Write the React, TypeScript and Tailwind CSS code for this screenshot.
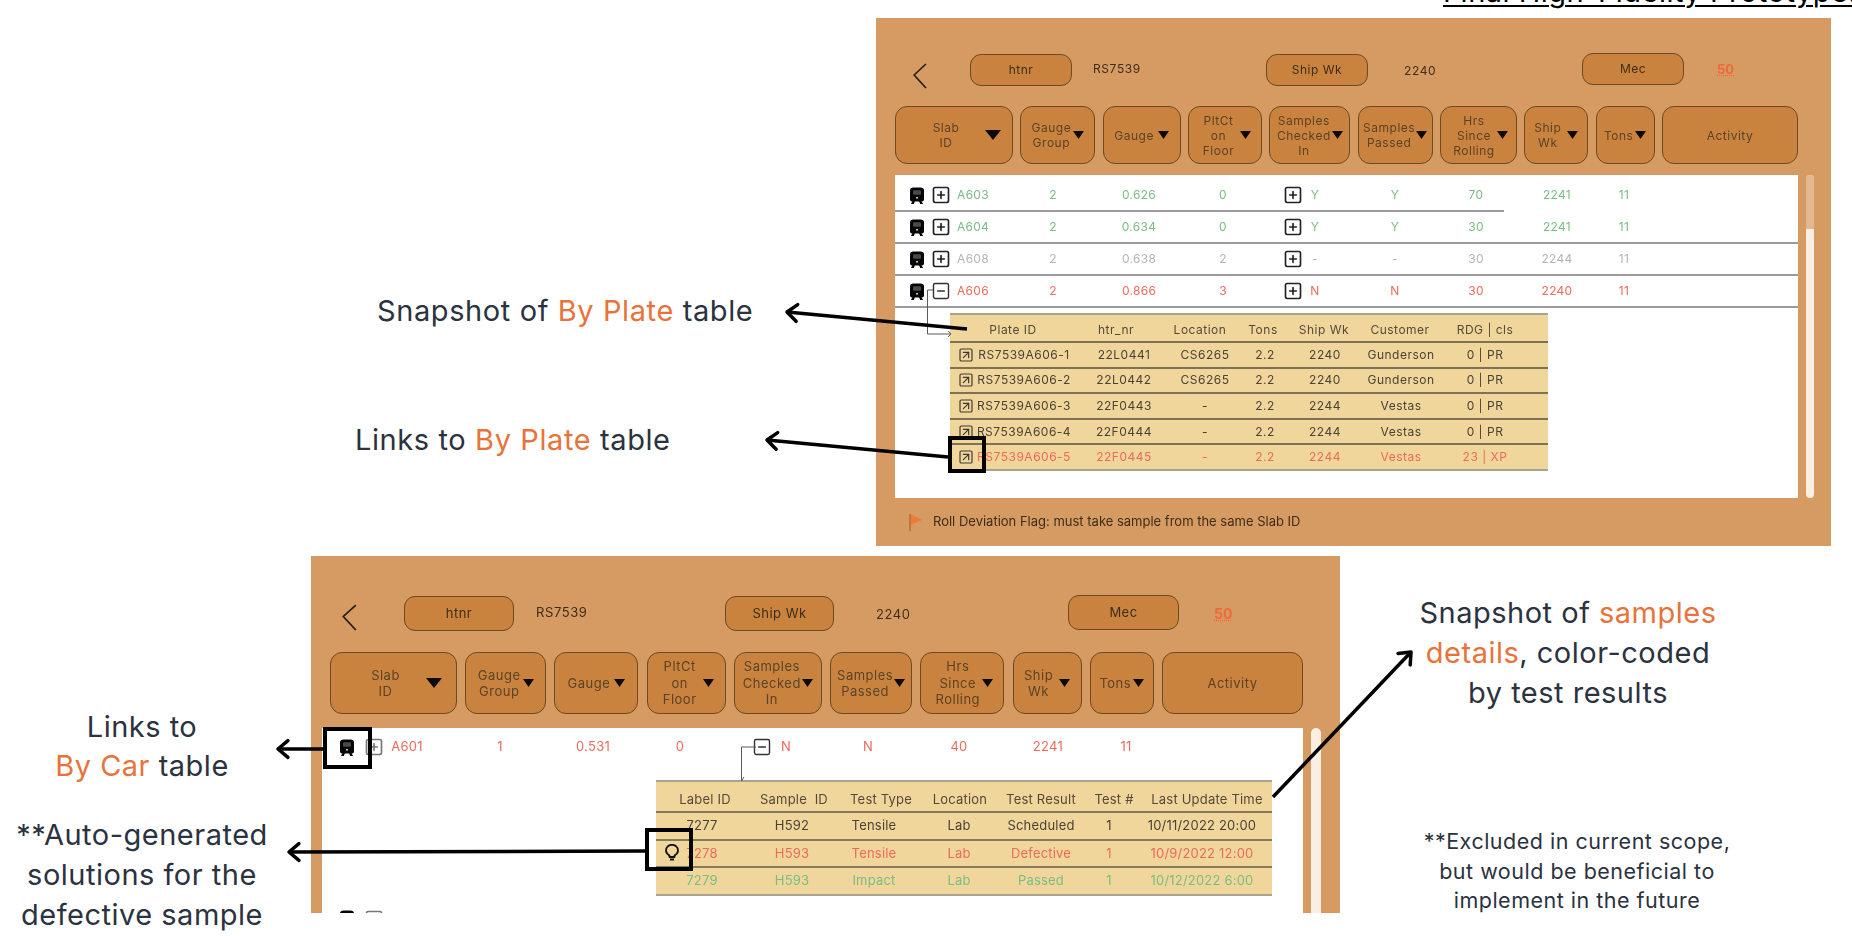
import { SquareArrowUpRight, SquareMinus, SquarePlus } from "lucide-react";

const GREEN = "text-[#79bd84]";
const GREY = "text-[#b4b4b4]";
const RED = "text-[#ec6a5c]";
const DARK = "text-[#4a4238]";

function Train() {
  return (
    <svg width="16" height="17" viewBox="0 0 16 17" className="shrink-0">
      <path d="M1 3.500Q1 .5 4.500 .5H11.500Q15 .5 15 3.500V12.500Q15 14.500 13 14.500H3Q1 14.500 1 12.500Z" fill="#060606" />
      <path d="M3.500 14 2 17H4.800L6 14ZM12.500 14 14 17H11.200L10 14Z" fill="#060606" />
      <rect x="4" y="3.200" width="8" height="4.500" rx="1" fill="#4a4a4a" />
      <circle cx="8" cy="10.800" r="1" fill="#d8d8d8" />
    </svg>
  );
}

function Bulb() {
  return (
    <svg width="14" height="17" viewBox="0 0 14 17" className="absolute left-[343px] top-[116px]">
      <path d="M4.500 11.500Q1 9.500 1 6.500A6 5.700 0 0 1 13 6.500Q13 9.500 9.500 11.500V13H4.500Z" fill="none" stroke="#111" strokeWidth="1.800" strokeLinejoin="round" />
      <path d="M5 15.500H9" stroke="#111" strokeWidth="2" />
    </svg>
  );
}

function Caret({ big }: { big?: boolean }) {
  return big ? (
    <svg width="16" height="10" viewBox="0 0 16 10" className="shrink-0">
      <polygon points="0,0 16,0 8,10" fill="#0d0a06" />
    </svg>
  ) : (
    <svg width="11" height="8" viewBox="0 0 11 8" className="shrink-0">
      <polygon points="0,0 11,0 5.500,8" fill="#0d0a06" />
    </svg>
  );
}

function Chevron({ w, h }: { w: number; h: number }) {
  return (
    <svg width={w} height={h} viewBox="0 0 14 26" preserveAspectRatio="none" className="shrink-0">
      <polyline points="13,1 2,12 13,25" fill="none" stroke="#2a2018" strokeWidth="1.600" />
    </svg>
  );
}

function Cell({ children }: { children?: React.ReactNode }) {
  return <span className="flex w-0 items-center justify-center whitespace-nowrap">{children}</span>;
}

function Pill({ label, className }: { label: string; className: string }) {
  return (
    <div className={`flex shrink-0 items-center justify-center rounded-[11px] border border-[#6b4a24] bg-[#c9833f] tracking-[0.5px] text-[#3e2d18] ${className}`}>
      {label}
    </div>
  );
}

const headers = [
  { lines: ["Slab", "ID"], gap: "gap-[26px] pl-[26px]", big: true },
  { lines: ["Gauge", "Group"], gap: "gap-[2px]" },
  { lines: ["Gauge"], gap: "gap-[4px]" },
  { lines: ["PltCt", "on", "Floor"], gap: "gap-[6px] pl-[4px]" },
  { lines: ["Samples", "Checked", "In"], gap: "gap-[1px]" },
  { lines: ["Samples", "Passed"], gap: "gap-[1px]" },
  { lines: ["Hrs", "Since", "Rolling"], gap: "gap-[2px] pl-[4px]" },
  { lines: ["Ship", "Wk"], gap: "gap-[6px]" },
  { lines: ["Tons"], gap: "gap-[2px]" },
  { lines: ["Activity"], gap: "" },
];

function HeaderRow({ widths, className }: { widths: string[]; className: string }) {
  return (
    <div className={`flex tracking-[0.5px] ${className}`}>
      {headers.map((h, i) => (
        <div
          key={i}
          className={`flex shrink-0 items-center justify-center rounded-[12px] border border-[#6b4a24] bg-[#c9833f] text-center text-[#5a4326] ${h.gap} ${widths[i]}`}
        >
          <div>
            {h.lines.map((l) => (
              <div key={l}>{l}</div>
            ))}
          </div>
          {i < 9 && <Caret big={h.big} />}
        </div>
      ))}
    </div>
  );
}

type RowProps = {
  grid: string;
  color: string;
  open?: boolean;
  boxClass?: string;
  values: string[];
  second?: "plus" | "minus" | "none";
};

function SlabRow({ grid, color, open, boxClass = "text-[#222]", values, second = "plus" }: RowProps) {
  return (
    <div className={`grid h-[30px] items-center ${grid} ${color}`}>
      <Cell><Train /></Cell>
      <Cell>
        {open ? (
          <SquareMinus size={20} strokeWidth={1.700} className="shrink-0 text-[#333]" />
        ) : (
          <SquarePlus size={20} strokeWidth={2} className={`shrink-0 ${boxClass}`} />
        )}
      </Cell>
      <Cell>{values[0]}</Cell>
      <Cell>{values[1]}</Cell>
      <Cell>{values[2]}</Cell>
      <Cell>{values[3]}</Cell>
      <Cell>
        {second === "minus" && <SquareMinus size={20} strokeWidth={1.700} className="shrink-0 text-[#333]" />}
        {second === "plus" && <SquarePlus size={20} strokeWidth={2} className="shrink-0 text-[#222]" />}
      </Cell>
      <Cell>{values[4]}</Cell>
      <Cell>{values[5]}</Cell>
      <Cell>{values[6]}</Cell>
      <Cell>{values[7]}</Cell>
      <Cell>{values[8]}</Cell>
    </div>
  );
}

const plateHead = ["Plate ID", "htr_nr", "Location", "Tons", "Ship Wk", "Customer", "RDG | cls"];
const plates = [
  ["RS7539A606-1", "22L0441", "CS6265", "2.2", "2240", "Gunderson", "0 | PR"],
  ["RS7539A606-2", "22L0442", "CS6265", "2.2", "2240", "Gunderson", "0 | PR"],
  ["RS7539A606-3", "22F0443", "-", "2.2", "2244", "Vestas", "0 | PR"],
  ["RS7539A606-4", "22F0444", "-", "2.2", "2244", "Vestas", "0 | PR"],
  ["RS7539A606-5", "22F0445", "-", "2.2", "2244", "Vestas", "23 | XP"],
];

function PlateTable() {
  return (
    <div className="ml-[55px] mt-[5px] w-[598px] border-y-2 border-[#a9a391] bg-[#f1d69c] text-[12px] tracking-[0.5px]">
      <div className="grid h-[26px] grid-cols-[103px_84px_63px_61px_76px_85px_1fr] items-center pl-[63px] pt-[4px] text-[#54493a]">
        {plateHead.map((h) => (
          <Cell key={h}>{h}</Cell>
        ))}
      </div>
      {plates.map((p, i) => (
        <div
          key={p[0]}
          className={`grid h-[25.600px] grid-cols-[58px_100px_81px_60px_60px_76px_84px_1fr] items-center border-t-2 border-[#7d7258] pl-[16px] ${i === 4 ? RED : DARK}`}
        >
          <Cell>
            <SquareArrowUpRight size={16} strokeWidth={1.800} className="shrink-0 text-[#3c3a34]" />
          </Cell>
          {p.map((v, j) => (
            <Cell key={j}>{v}</Cell>
          ))}
        </div>
      ))}
    </div>
  );
}

const sampleHead = ["Label ID", "Sample\u00a0 ID", "Test Type", "Location", "Test Result", "Test #", "Last Update Time"];
const samples = [
  { color: DARK, v: ["7277", "H592", "Tensile", "Lab", "Scheduled", "1", "10/11/2022 20:00"] },
  { color: RED, v: ["7278", "H593", "Tensile", "Lab", "Defective", "1", "10/9/2022 12:00"] },
  { color: GREEN, v: ["7279", "H593", "Impact", "Lab", "Passed", "1", "10/12/2022 6:00"] },
];

function SampleTable() {
  return (
    <div className="ml-[334px] mt-[18px] w-[616px] border-y-2 border-[#a9a391] bg-[#f1d69c] text-[13px] tracking-[0.2px]">
      <div className="grid h-[29px] grid-cols-[89px_87px_79px_81px_73px_93px_1fr] items-center pl-[49px] pt-[6px] text-[#54493a]">
        {sampleHead.map((h) => (
          <Cell key={h}>{h}</Cell>
        ))}
      </div>
      {samples.map((s) => (
        <div
          key={s.v[0]}
          className={`grid h-[27.500px] grid-cols-[90px_82px_85px_82px_68px_93px_1fr] items-center border-t-2 border-[#857a5e] pl-[46px] ${s.color}`}
        >
          {s.v.map((v, j) => (
            <Cell key={j}>{v}</Cell>
          ))}
        </div>
      ))}
    </div>
  );
}

function Divider({ className = "w-full" }: { className?: string }) {
  return <div className={`h-[2px] bg-[#9b9b9b] ${className}`} />;
}

function UpperPanel() {
  const grid = "grid-cols-[24px_32px_80px_86px_84px_70px_22px_80px_81px_81px_67px_1fr] pl-[22px]";
  return (
    <div className="absolute left-[876px] top-[18px] h-[528px] w-[955px] overflow-hidden bg-[#d69b62] pl-[19px] pt-[36px] font-['Inter',sans-serif] blur-[0.5px]">
      <div className="flex h-[32px] items-center text-[12px] text-[#3e2d18]">
        <div className="ml-[17px] mr-[-1px] mt-[12px]"><Chevron w={15} h={26} /></div>
        <Pill label="htnr" className="ml-[44px] h-[32px] w-[102px]" />
        <span className="ml-[21px] mb-[2px] w-[173px] tracking-[0.6px]">RS7539</span>
        <Pill label="Ship Wk" className="h-[32px] w-[102px]" />
        <span className="ml-[36px] mt-[2px] w-[178px] tracking-[0.6px]">2240</span>
        <Pill label="Mec" className="-mt-[2px] h-[32px] w-[102px]" />
        <span className="ml-[33px] text-[13px] font-bold text-[#ee6a3c] underline decoration-dotted">50</span>
      </div>
      <HeaderRow
        className="mt-[20px] h-[58px] gap-[7.330px] text-[12px] leading-[15px]"
        widths={["w-[118px]", "w-[75px]", "w-[78px]", "w-[74px]", "w-[81px]", "w-[75px]", "w-[77px]", "w-[64px]", "w-[59px]", "w-[136px]"]}
      />
      <div className="mt-[11px] flex h-[323px] gap-[8px]">
        <div className="relative w-[903px] bg-white pt-[5px] text-[12px] tracking-[0.3px]">
          <SlabRow grid={grid} color={GREEN} values={["A603", "2", "0.626", "0", "Y", "Y", "70", "2241", "11"]} />
          <Divider className="w-[609px]" />
          <SlabRow grid={grid} color={GREEN} values={["A604", "2", "0.634", "0", "Y", "Y", "30", "2241", "11"]} />
          <Divider />
          <SlabRow grid={grid} color={GREY} values={["A608", "2", "0.638", "2", "-", "-", "30", "2244", "11"]} />
          <Divider />
          <SlabRow grid={grid} color={RED} open values={["A606", "2", "0.866", "3", "N", "N", "30", "2240", "11"]} />
          <Divider />
          <PlateTable />
          <svg width="26" height="48" viewBox="0 0 26 48" className="absolute left-[32px] top-[114px]">
            <polyline points="6,1 0.500,1 0.500,45 24,45" fill="none" stroke="#5a5a5a" strokeWidth="1" />
            <polyline points="21,42 24,45 21,48" fill="none" stroke="#5a5a5a" strokeWidth="1" />
          </svg>
        </div>
        <div className="flex w-[8px] flex-col rounded-full bg-[#fbeee3]">
          <div className="h-[54px] rounded-t-full bg-[#e3b88e]" />
        </div>
      </div>
      <div className="mt-[14px] flex items-center gap-[10px] text-[13px] text-[#3e2d18]">
        <svg width="14" height="18" viewBox="0 0 14 18" className="ml-[14px] shrink-0">
          <path d="M1 1 13 7 1 12Z" fill="#ee7a3a" />
          <path d="M1 1V18" stroke="#b5703a" strokeWidth="1.500" />
        </svg>
        <span>Roll Deviation Flag: must take sample from the same Slab ID</span>
      </div>
    </div>
  );
}

function LowerPanel() {
  const grid = "grid-cols-[27px_33px_93px_93px_87px_82px_24px_82px_91px_89px_78px_1fr] pl-[25px]";
  return (
    <div className="absolute left-[311px] top-[556px] h-[357px] w-[1029px] overflow-hidden bg-[#d69b62] pl-[19px] pt-[40px] font-['Inter',sans-serif] blur-[0.5px]">
      <div className="flex h-[35px] items-center text-[13px] text-[#3e2d18]">
        <div className="ml-[11px] mt-[8px]"><Chevron w={16} h={27} /></div>
        <Pill label="htnr" className="ml-[47px] h-[35px] w-[110px]" />
        <span className="ml-[22px] mb-[2px] w-[189px] tracking-[0.6px]">RS7539</span>
        <Pill label="Ship Wk" className="h-[35px] w-[109px]" />
        <span className="ml-[42px] mt-[2px] w-[192px] tracking-[0.6px]">2240</span>
        <Pill label="Mec" className="-mt-[2px] h-[35px] w-[111px]" />
        <span className="ml-[35px] text-[14px] font-bold text-[#ee6a3c] underline decoration-dotted">50</span>
      </div>
      <HeaderRow
        className="mt-[21px] h-[62px] gap-[8.220px] text-[13px] leading-[16.500px]"
        widths={["w-[127px]", "w-[81px]", "w-[84px]", "w-[79px]", "w-[88px]", "w-[82px]", "w-[84px]", "w-[69px]", "w-[64px]", "w-[141px]"]}
      />
      <div className="-ml-[8px] mt-[14px] flex h-[190px] gap-[8px]">
        <div className="relative w-[981px] bg-white pt-[4px] text-[13px] tracking-[0.3px]">
          <SlabRow grid={grid} color={RED} boxClass="text-[#777]" second="minus" values={["A601", "1", "0.531", "0", "N", "N", "40", "2241", "11"]} />
          <SampleTable />
          <div className="mt-[8px]">
            <SlabRow grid={grid} color={GREY} boxClass="text-[#777]" second="none" values={["", "", "", "", "", "", "", "", ""]} />
          </div>
          <svg width="16" height="36" viewBox="0 0 16 36" className="absolute left-[419px] top-[18px]">
            <polyline points="15,1 0.500,1 0.500,34" fill="none" stroke="#5a5a5a" strokeWidth="1" />
            <polyline points="-2,31 0.500,35 3,31" fill="none" stroke="#5a5a5a" strokeWidth="1" />
          </svg>
          <Bulb />
        </div>
        <div className="w-[10px] rounded-full bg-[#fbeee3]" />
      </div>
    </div>
  );
}

function Arrow({ x1, y1, x2, y2 }: { x1: number; y1: number; x2: number; y2: number }) {
  const a = Math.atan2(y1 - y2, x1 - x2);
  const head = (d: number) => `${x2 + 13 * Math.cos(a + d)},${y2 + 13 * Math.sin(a + d)}`;
  return (
    <g fill="none" stroke="#000" strokeWidth="3.500" strokeLinecap="round" strokeLinejoin="round">
      <line x1={x1} y1={y1} x2={x2} y2={y2} strokeLinecap="butt" />
      <polyline points={`${head(0.7)} ${x2},${y2} ${head(-0.7)}`} />
    </g>
  );
}

function Note({ className, children }: { className: string; children: React.ReactNode }) {
  return <div className={`absolute whitespace-nowrap text-center font-['Inter',sans-serif] text-[#2b3240] ${className}`}>{children}</div>;
}

const Hi = ({ children }: { children: React.ReactNode }) => <span className="text-[#e8733a]">{children}</span>;

export default function App() {
  return (
    <div className="relative h-[936px] w-[1852px] overflow-hidden bg-white">
      <div className="absolute left-[1443px] top-[-30px] whitespace-nowrap font-['Inter',sans-serif] text-[29px] tracking-[0.5px] text-black underline decoration-2 underline-offset-[3px]">
        Final High-Fidelity Prototype.png
      </div>

      <UpperPanel />
      <LowerPanel />

      <Note className="left-[377px] top-[294px] text-[29px] leading-[34px] tracking-[0.6px]">
        Snapshot of <Hi>By Plate</Hi> table
      </Note>
      <Note className="left-[355px] top-[423px] text-[29px] leading-[34px] tracking-[0.6px]">
        Links to <Hi>By Plate</Hi> table
      </Note>
      <Note className="left-[42px] top-[707px] w-[200px] text-[29px] leading-[39px] tracking-[0.5px]">
        Links to
        <br />
        <Hi>By Car</Hi> table
      </Note>
      <Note className="left-[12px] top-[815px] w-[260px] text-[29px] leading-[40px] tracking-[0.5px]">
        **Auto-generated
        <br />
        solutions for the
        <br />
        defective sample
      </Note>
      <Note className="left-[1388px] top-[593px] w-[360px] text-[29px] leading-[40px] tracking-[0.5px]">
        Snapshot of <Hi>samples</Hi>
        <br />
        <Hi>details</Hi>, color-coded
        <br />
        by test results
      </Note>
      <Note className="left-[1407px] top-[827px] w-[340px] text-[21.500px] leading-[29.500px] tracking-[0.5px]">
        **Excluded in current scope,
        <br />
        but would be beneficial to
        <br />
        implement in the future
      </Note>

      <div className="absolute left-[948px] top-[436px] h-[37px] w-[38px] border-4 border-black" />
      <div className="absolute left-[323px] top-[727px] h-[42px] w-[49px] border-4 border-black" />
      <div className="absolute left-[645px] top-[828px] h-[43px] w-[48px] border-4 border-black" />

      <svg width="1852" height="936" viewBox="0 0 1852 936" className="pointer-events-none absolute left-0 top-0">
        <Arrow x1={967} y1={329} x2={787} y2={312} />
        <Arrow x1={948} y1={457} x2={767} y2={440} />
        <Arrow x1={323} y1={749} x2={278} y2={749} />
        <Arrow x1={645} y1={851} x2={289} y2={852} />
        <Arrow x1={1273} y1={797} x2={1411} y2={652} />
      </svg>
    </div>
  );
}
